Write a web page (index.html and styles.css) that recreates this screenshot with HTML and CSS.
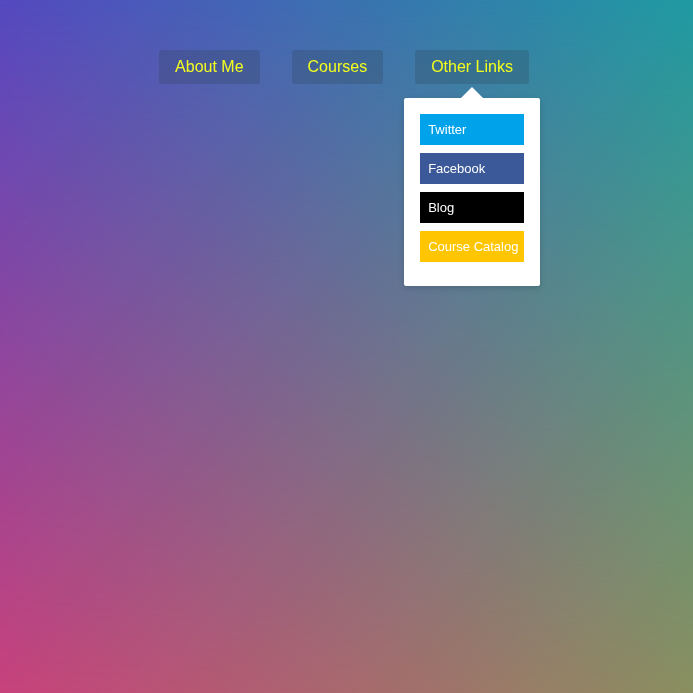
FILE: index.html
```html
<!DOCTYPE html>
<html lang="en">
<head>
<meta charset="utf-8">
<title>Menu</title>
<link rel="stylesheet" href="styles.css">
</head>
<body>
<nav class="nav">
  <ul class="menu">
    <li class="menu-item"><a class="menu-link" href="#">About Me</a></li>
    <li class="menu-item"><a class="menu-link" href="#">Courses</a></li>
    <li class="menu-item has-dropdown">
      <a class="menu-link" href="#">Other Links</a>
      <ul class="dropdown">
        <li><a class="drop-link twitter" href="#">Twitter</a></li>
        <li><a class="drop-link facebook" href="#">Facebook</a></li>
        <li><a class="drop-link blog" href="#">Blog</a></li>
        <li><a class="drop-link catalog" href="#">Course Catalog</a></li>
      </ul>
    </li>
  </ul>
</nav>
</body>
</html>
```

FILE: styles.css
```css
html {
  min-height: 100%;
  background: linear-gradient(to right, #c8427c, #8a9060);
}
body {
  margin: 0;
  min-height: 100vh;
  font-family: "Liberation Sans", Arial, sans-serif;
}
body::before {
  content: "";
  position: fixed;
  inset: 0;
  z-index: -1;
  background: linear-gradient(to right, #5449c0, #1f9aa2);
  -webkit-mask-image: linear-gradient(to bottom, #000, rgba(0,0,0,0));
  mask-image: linear-gradient(to bottom, #000, rgba(0,0,0,0));
}
.nav {
  padding-top: 50px;
  padding-right: 5px;
}
.menu {
  list-style: none;
  margin: 0;
  padding: 0;
  display: flex;
  justify-content: center;
  gap: 32px;
}
.menu-item {
  position: relative;
}
.menu-link {
  display: block;
  padding: 8px 16px;
  font-size: 16px;
  line-height: 18px;
  color: #f5ff1e;
  text-decoration: none;
  background: rgba(44, 62, 80, 0.25);
  border-radius: 3px;
}
.dropdown {
  position: absolute;
  top: 48px;
  left: -11px;
  width: 104px;
  list-style: none;
  margin: 0;
  padding: 16px;
  background: #fff;
  border-radius: 2px;
  box-shadow: 0 2px 6px rgba(0, 0, 0, 0.15);
  display: flex;
  flex-direction: column;
  gap: 8px;
}
.dropdown::before {
  content: "";
  position: absolute;
  top: -11px;
  left: 57px;
  border-left: 11px solid transparent;
  border-right: 11px solid transparent;
  border-bottom: 11px solid #fff;
}
.dropdown li:last-child {
  margin-bottom: 8px;
}
.drop-link {
  display: block;
  padding: 8px;
  font-size: 13px;
  line-height: 15px;
  color: #fff;
  text-decoration: none;
  white-space: nowrap;
}
.twitter { background: #00a2e9; }
.facebook { background: #3b5998; }
.blog { background: #000; }
.catalog { background: #ffc600; }
```
